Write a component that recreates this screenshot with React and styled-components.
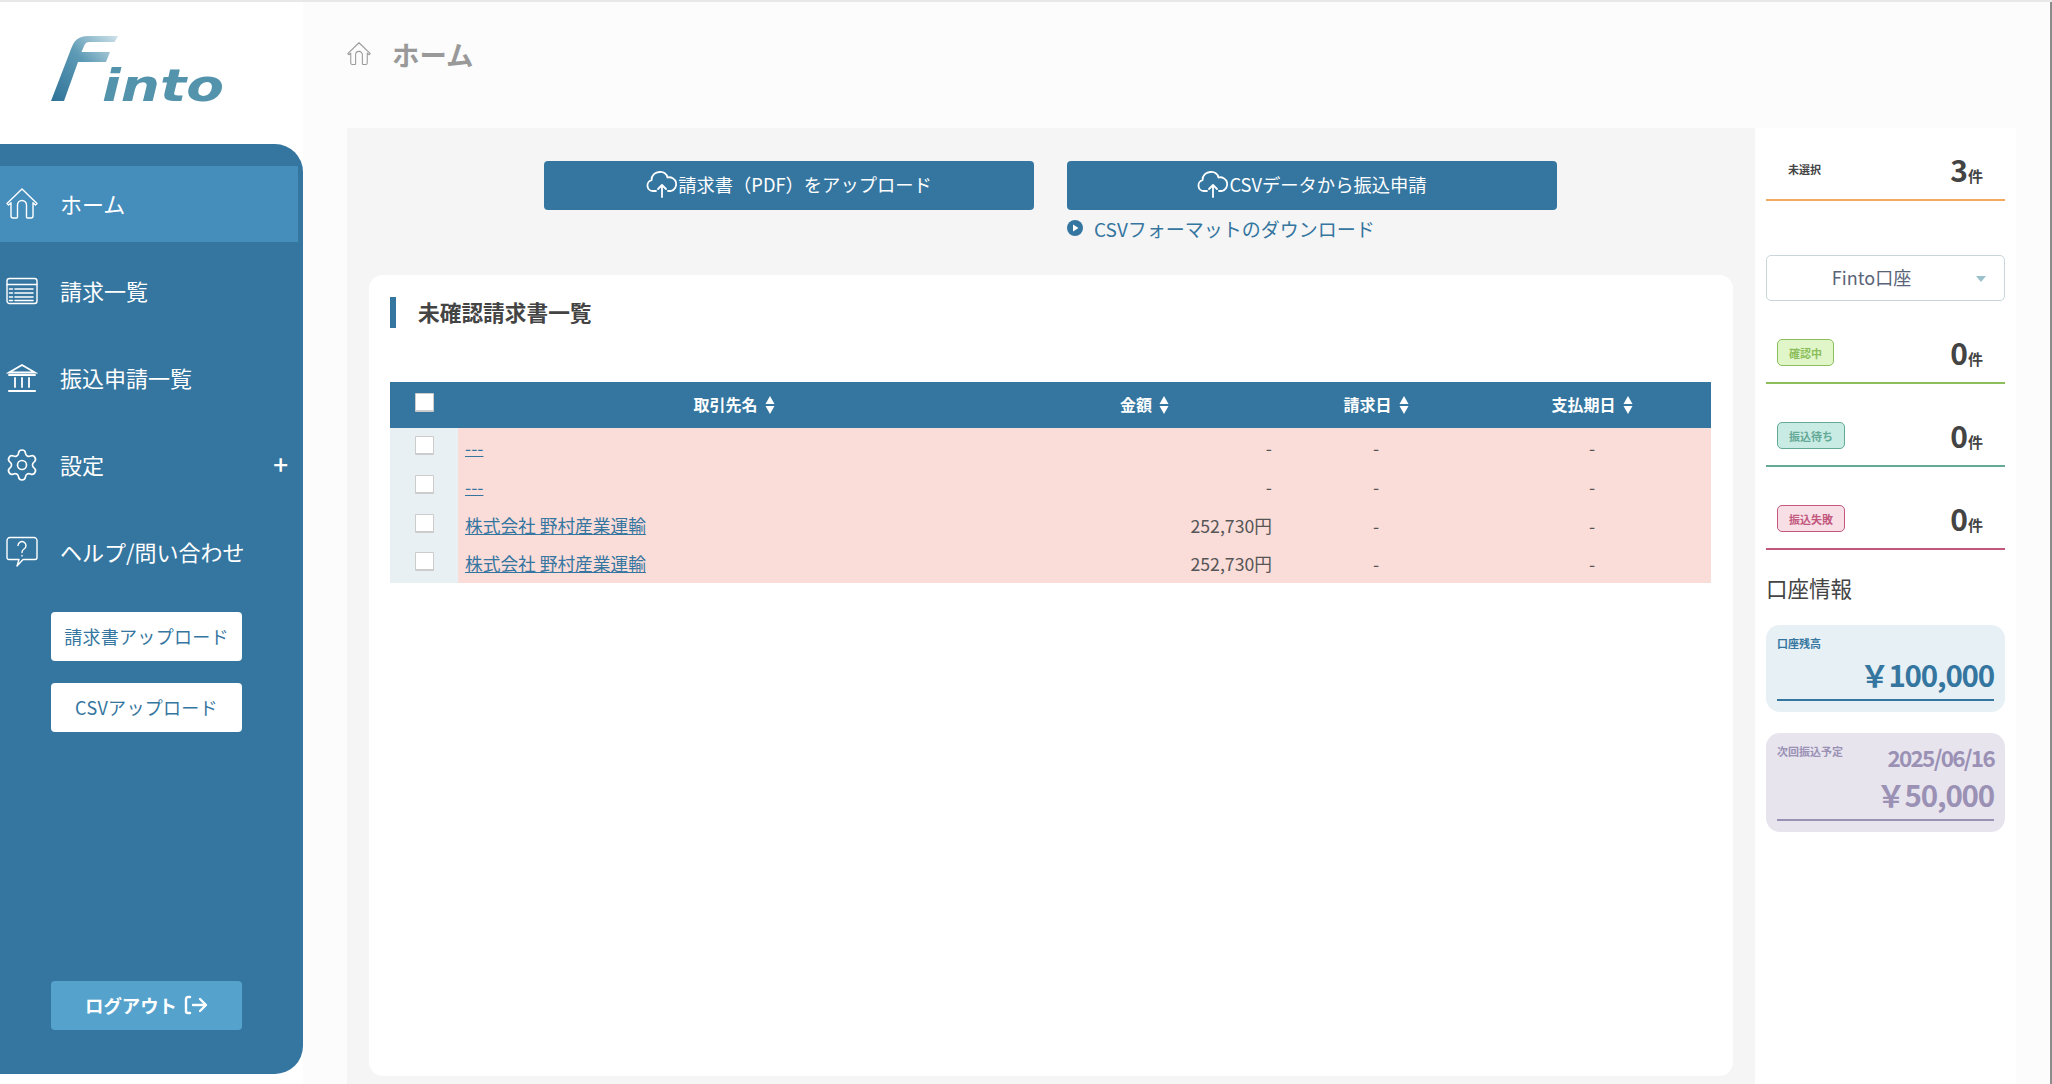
import React from "react";
import styled, { createGlobalStyle } from "styled-components";
import { Settings } from "lucide-react";

const GlobalStyle = createGlobalStyle`
  html, body {
    margin: 0;
    padding: 0;
    background: #fff;
  }
  body {
    font-family: "Noto Sans CJK JP", "Noto Sans", sans-serif;
    color: #444;
  }
  * {
    box-sizing: border-box;
  }
`;

const Page = styled.div`
  display: flex;
  width: 2052px;
  height: 1084px;
  overflow: hidden;
  border-top: 2px solid #e8e8e8;
`;

const Sidebar = styled.aside`
  display: flex;
  flex-direction: column;
  width: 303px;
  flex: none;
  background: #fff;
`;

const LogoBox = styled.div`
  height: 142px;
  flex: none;
  padding: 30px 0 0 50px;
`;

const SideNav = styled.nav`
  display: flex;
  flex-direction: column;
  height: 930px;
  padding: 22px 5px 44px 0;
  background: #3576a0;
  border-radius: 0 28px 28px 0;
`;

const NavItem = styled.a`
  display: flex;
  align-items: center;
  height: 76px;
  flex: none;
  margin-bottom: 11px;
  padding: 0 10px 0 6px;
  color: #fff;
  font-size: 22px;
  background: ${(p) => (p.$active ? "#458dbb" : "transparent")};

  svg {
    flex: none;
    width: 32px;
    height: 32px;
  }
`;

const GearIcon = styled(Settings)`
  && {
    width: 36px;
    height: 36px;
    margin: 0 -2px;
  }
`;

const NavLabel = styled.span`
  flex: 1;
  margin-left: 22px;
  padding-bottom: 2px;
`;

const Plus = styled.span`
  padding-bottom: 2px;
  font-size: 26px;
  font-weight: 500;
  line-height: 1;
`;

const SideButton = styled.a`
  display: flex;
  align-items: center;
  justify-content: center;
  width: 191px;
  height: 49px;
  flex: none;
  margin: ${(p) => (p.$first ? "11px" : "0")} 0 22px 51px;
  padding-bottom: 2px;
  background: #fff;
  border-radius: 4px;
  color: #3576a0;
  font-size: 18px;
  letter-spacing: 0.3px;
`;

const LogoutButton = styled.a`
  display: flex;
  align-items: center;
  justify-content: center;
  gap: 7px;
  width: 191px;
  height: 49px;
  flex: none;
  margin: auto 0 0 51px;
  padding-bottom: 1px;
  background: #55a2cd;
  border-radius: 4px;
  color: #fff;
  font-size: 18.400px;
  font-weight: 700;
`;

const Main = styled.main`
  display: flex;
  flex-direction: column;
  flex: 1;
  min-width: 0;
  padding-left: 44px;
  background: #fcfcfc;
  border-right: 2px solid #8c8c8c;
`;

const PageHeader = styled.header`
  display: flex;
  align-items: center;
  height: 126px;
  flex: none;
  padding-bottom: 22px;
  gap: 21px;
  color: #999;
  font-size: 27.400px;
  font-weight: 700;
`;

const ContentRow = styled.div`
  display: flex;
  flex: 1;
  min-height: 0;
  padding-right: 34px;
`;

const Panel = styled.section`
  display: flex;
  flex-direction: column;
  width: 1408px;
  flex: none;
  padding: 33px 22px 8px 22px;
  background: #f5f5f5;
`;

const ActionRow = styled.div`
  display: flex;
  gap: 33px;
  margin-left: 175px;
`;

const ActionCol = styled.div`
  display: flex;
  flex-direction: column;
  width: 490px;
`;

const ActionButton = styled.a`
  display: flex;
  align-items: center;
  justify-content: center;
  height: 49px;
  padding-bottom: 3px;
  background: #3576a0;
  border-radius: 4px;
  color: #fff;
  font-size: 18.300px;
`;

const DownloadLink = styled.a`
  display: flex;
  align-items: center;
  gap: 11px;
  height: 26px;
  margin-top: 5px;
  color: #3576a0;
  font-size: 19px;
`;

const Card = styled.div`
  flex: 1;
  min-height: 0;
  margin-top: 34px;
  padding: 22px 22px 0 21px;
  background: #fff;
  border-radius: 14px;
`;

const CardTitle = styled.h2`
  display: flex;
  align-items: center;
  height: 31px;
  margin: 0 0 54px;
  padding: 0 0 2px 22px;
  border-left: 6px solid #3576a0;
  color: #444;
  font-size: 21.700px;
  font-weight: 700;
`;

const Table = styled.table`
  width: 1321px;
  border-collapse: collapse;
  table-layout: fixed;
  font-size: 17.700px;
`;

const HeadRow = styled.tr`
  height: 46px;
  background: #3576a0;
`;

const Th = styled.th`
  padding: 0 0 2px;
  color: #fff;
  font-size: 16px;
  font-weight: 700;
  text-align: center;
`;

const CheckCell = styled.td`
  height: 38.750px;
  padding: 8px 0 0 25px;
  background: #e8f0f4;
  vertical-align: top;
`;

const HeadCheckCell = styled.th`
  padding: 0 0 5px 25px;
  text-align: left;
`;

const Checkbox = styled.input.attrs({ type: "checkbox" })`
  display: block;
  width: 19px;
  height: 19px;
  margin: 0;
  appearance: none;
  background: #fff;
  border: 1px solid #ccc;
  border-bottom-width: 2px;
  border-radius: 1px;
`;

const Td = styled.td`
  height: 38.750px;
  padding: 7px ${(p) => (p.$align === "right" ? "7px" : "10px")} 0 ${(p) => (p.$align === "left" ? "7px" : "10px")};
  background: #fadcd9;
  color: #555;
  line-height: 24px;
  vertical-align: top;
  text-align: ${(p) => p.$align || "center"};
`;

const RowLink = styled.a`
  color: #3576a0;
  text-decoration: underline;
`;

const SortMark = styled.svg`
  width: 10px;
  height: 18px;
  margin-left: 7px;
  vertical-align: -3px;
`;

const SideStats = styled.aside`
  display: flex;
  flex-direction: column;
  width: 261px;
  flex: none;
  padding: 0 11px;
  background: #fff;
`;

const StatRow = styled.div`
  display: flex;
  align-items: flex-end;
  justify-content: space-between;
  height: ${(p) => p.$height || 83}px;
  flex: none;
  padding: 0 22px 3px 11px;
  border-bottom: 2px solid ${(p) => p.$line};
`;

const PlainLabel = styled.span`
  margin: 0 0 19px 11px;
  color: #444;
  font-size: 11px;
  font-weight: 700;
`;

const Badge = styled.span`
  display: flex;
  align-items: center;
  height: 27px;
  margin-bottom: 13px;
  padding: 0 11px;
  background: ${(p) => p.$bg};
  border: 1px solid ${(p) => p.$color};
  border-radius: 5px;
  color: ${(p) => p.$color};
  font-size: 11px;
  font-weight: 700;
`;

const Count = styled.span`
  color: #444;
  font-size: 30px;
  font-weight: 700;
  line-height: 40px;
`;

const CountUnit = styled.span`
  font-size: 15px;
`;

const AccountSelect = styled.div`
  position: relative;
  display: flex;
  align-items: center;
  justify-content: center;
  height: 46px;
  flex: none;
  margin: 54px 0 0;
  padding: 0 28px 2px 0;
  background: #fff;
  border: 1px solid #c8d6da;
  border-radius: 5px;
  color: #5a6478;
  font-size: 18px;
`;

const Caret = styled.span`
  position: absolute;
  top: 20px;
  right: 18px;
  border-left: 5px solid transparent;
  border-right: 5px solid transparent;
  border-top: 6px solid #9cc0cc;
`;

const SectionTitle = styled.h3`
  margin: 22px 0 21px;
  color: #444;
  font-size: 21.500px;
  font-weight: 400;
  line-height: 32px;
`;

const BalanceCard = styled.div`
  position: relative;
  display: flex;
  flex-direction: column;
  height: ${(p) => p.$height}px;
  flex: none;
  margin-bottom: 21px;
  padding: 9px 11px 0;
  background: ${(p) => p.$bg};
  border-radius: 14px;
  color: ${(p) => p.$color};
`;

const BalanceLabel = styled.span`
  font-size: 11px;
  font-weight: 700;
  line-height: 18px;
`;

const BalanceDate = styled.span`
  position: absolute;
  top: 8px;
  right: 11px;
  font-size: 22.500px;
  font-weight: 700;
  line-height: 32px;
  letter-spacing: -1.700px;
`;

const BalanceAmount = styled.div`
  margin-top: auto;
  margin-bottom: 11px;
  padding-bottom: 3px;
  border-bottom: 2px solid ${(p) => p.$color};
  font-size: 29.500px;
  font-weight: 700;
  line-height: 44px;
  letter-spacing: -1.200px;
  text-align: right;
`;

const HomeIcon = ({ size = 32, color = "#fff" }) => (
  <svg width={size} height={size} viewBox="0 0 32 32" fill="none" stroke={color} strokeWidth="1.400" strokeLinejoin="round" strokeLinecap="round">
    <path d="M1 15.500 16 1l15 14.500-1.500 1.500L27 14.800V28a2 2 0 0 1-2 2h-3.500a1 1 0 0 1-1-1V17a4.500 4.500 0 0 0-9 0v12a1 1 0 0 1-1 1H7a2 2 0 0 1-2-2V14.800L2.500 17z" />
  </svg>
);

const ListIcon = () => (
  <svg viewBox="0 0 32 32" fill="none" stroke="#fff" strokeWidth="1.400" strokeLinecap="round">
    <rect x="1" y="3.500" width="30" height="25" rx="2.500" />
    <path d="M1 9.500h30" />
    <path d="M3.500 14h3M3.500 18h3M3.500 22h3M3.500 25.500h3M9 14h18M9 18h18M9 22h18M9 25.500h18" strokeWidth="1.600" />
  </svg>
);

const BankIcon = () => (
  <svg viewBox="0 0 32 32" fill="none" stroke="#fff" strokeWidth="1.800" strokeLinecap="round">
    <path d="M3 10.500 16 3l13 7.500z" />
    <path d="M3 13h26M9 16v9M16 16v9M23 16v9" />
    <path d="M3 29h26" strokeWidth="2.200" />
  </svg>
);

const HelpIcon = () => (
  <svg viewBox="0 0 32 32" fill="none" stroke="#fff" strokeWidth="1.400" strokeLinecap="round" strokeLinejoin="round">
    <path d="M4 1.500h24a3 3 0 0 1 3 3v17a2 2 0 0 1-2 2H17l-6 6.500 2-6.500H3a2 2 0 0 1-2-2v-17a3 3 0 0 1 3-3z" />
    <path d="M12 9.500a4 4 0 1 1 6 3.500c-1.500.900-2 1.700-2 3.500M16 19.500v.500" />
  </svg>
);

const CloudUploadIcon = () => (
  <svg width="32" height="28" viewBox="0 0 32 28" fill="none" stroke="#fff" strokeWidth="1.800" strokeLinecap="round" strokeLinejoin="round">
    <path d="M10 21H7a5.500 5.500 0 0 1-1.500-10.800A8 8 0 0 1 14 2a7 7 0 0 1 7.500 5.500A6.800 6.800 0 0 1 25 21h-3" />
    <path d="M16 27V15M12 19l4-4 4 4" />
  </svg>
);

const LogoutIcon = () => (
  <svg width="24" height="20" viewBox="0 0 24 20" fill="none" stroke="#fff" strokeWidth="2.400" strokeLinecap="round" strokeLinejoin="round">
    <path d="M6 2H4a2 2 0 0 0-2 2v12a2 2 0 0 0 2 2h2" />
    <path d="M9 10h13M16 4l6 6-6 6" />
  </svg>
);

const PlayIcon = () => (
  <svg width="16" height="16" viewBox="0 0 16 16">
    <circle cx="8" cy="8" r="8" fill="#3576a0" />
    <path d="M6 4.500 11.500 8 6 11.500z" fill="#fff" />
  </svg>
);

const SortIcon = () => (
  <SortMark viewBox="0 0 10 18">
    <path d="M5 0l4.500 8H.500zM5 18 .500 10h9z" fill="#fff" />
  </SortMark>
);

const Logo = () => (
  <svg width="190" height="80" viewBox="0 0 190 80">
    <defs>
      <linearGradient id="finto-f" x1="0" y1="1" x2="1" y2="0">
        <stop offset="0" stopColor="#2f7298" />
        <stop offset="0.55" stopColor="#5d9ab5" />
        <stop offset="1" stopColor="#cfe3ea" />
      </linearGradient>
    </defs>
    <path
      d="M68 4H38C28 4 24 9 21 17L1 69h13l14-39h28l4-10H31.500l3-7c1-2 2-3 5-3h25z"
      fill="url(#finto-f)"
    />
    <text
      x="52"
      y="69"
      fontFamily="DejaVu Sans"
      fontSize="45"
      fontWeight="700"
      fontStyle="italic"
      textLength="122"
      lengthAdjust="spacingAndGlyphs"
      fill="#5393ab"
    >
      into
    </text>
  </svg>
);

const rows = [
  { name: "---", amount: "-" },
  { name: "---", amount: "-" },
  { name: "株式会社 野村産業運輸", amount: "252,730円" },
  { name: "株式会社 野村産業運輸", amount: "252,730円" },
];

const statuses = [
  { label: "確認中", color: "#8cbf5c", bg: "#e0f5c8" },
  { label: "振込待ち", color: "#63a996", bg: "#c8ebe4" },
  { label: "振込失敗", color: "#c2587e", bg: "#f8dfe6" },
];

export default function App() {
  return (
    <>
      <GlobalStyle />
      <Page>
        <Sidebar>
          <LogoBox>
            <Logo />
          </LogoBox>
          <SideNav>
            <NavItem $active>
              <HomeIcon />
              <NavLabel>ホーム</NavLabel>
            </NavItem>
            <NavItem>
              <ListIcon />
              <NavLabel>請求一覧</NavLabel>
            </NavItem>
            <NavItem>
              <BankIcon />
              <NavLabel>振込申請一覧</NavLabel>
            </NavItem>
            <NavItem>
              <GearIcon strokeWidth={1.1} />
              <NavLabel>設定</NavLabel>
              <Plus>+</Plus>
            </NavItem>
            <NavItem>
              <HelpIcon />
              <NavLabel>ヘルプ/問い合わせ</NavLabel>
            </NavItem>
            <SideButton $first>請求書アップロード</SideButton>
            <SideButton>CSVアップロード</SideButton>
            <LogoutButton>
              ログアウト
              <LogoutIcon />
            </LogoutButton>
          </SideNav>
        </Sidebar>
        <Main>
          <PageHeader>
            <HomeIcon size={24} color="#999" />
            ホーム
          </PageHeader>
          <ContentRow>
            <Panel>
              <ActionRow>
                <ActionCol>
                  <ActionButton>
                    <CloudUploadIcon />
                    請求書（PDF）をアップロード
                  </ActionButton>
                </ActionCol>
                <ActionCol>
                  <ActionButton>
                    <CloudUploadIcon />
                    CSVデータから振込申請
                  </ActionButton>
                  <DownloadLink>
                    <PlayIcon />
                    CSVフォーマットのダウンロード
                  </DownloadLink>
                </ActionCol>
              </ActionRow>
              <Card>
                <CardTitle>未確認請求書一覧</CardTitle>
                <Table>
                  <colgroup>
                    <col width="68" />
                    <col width="552" />
                    <col width="269" />
                    <col width="194" />
                    <col width="238" />
                  </colgroup>
                  <thead>
                    <HeadRow>
                      <HeadCheckCell>
                        <Checkbox readOnly />
                      </HeadCheckCell>
                      <Th>
                        取引先名
                        <SortIcon />
                      </Th>
                      <Th>
                        金額
                        <SortIcon />
                      </Th>
                      <Th>
                        請求日
                        <SortIcon />
                      </Th>
                      <Th>
                        支払期日
                        <SortIcon />
                      </Th>
                    </HeadRow>
                  </thead>
                  <tbody>
                    {rows.map((row, i) => (
                      <tr key={i}>
                        <CheckCell>
                          <Checkbox readOnly />
                        </CheckCell>
                        <Td $align="left">
                          <RowLink>{row.name}</RowLink>
                        </Td>
                        <Td $align="right">{row.amount}</Td>
                        <Td>-</Td>
                        <Td>-</Td>
                      </tr>
                    ))}
                  </tbody>
                </Table>
              </Card>
            </Panel>
            <SideStats>
              <StatRow $height={73} $line="#f4a95f">
                <PlainLabel>未選択</PlainLabel>
                <Count>
                  3<CountUnit>件</CountUnit>
                </Count>
              </StatRow>
              <AccountSelect>
                Finto口座
                <Caret />
              </AccountSelect>
              {statuses.map((s) => (
                <StatRow key={s.label} $line={s.color}>
                  <Badge $color={s.color} $bg={s.bg}>
                    {s.label}
                  </Badge>
                  <Count>
                    0<CountUnit>件</CountUnit>
                  </Count>
                </StatRow>
              ))}
              <SectionTitle>口座情報</SectionTitle>
              <BalanceCard $height={87} $bg="#e7f0f4" $color="#3576a0">
                <BalanceLabel>口座残高</BalanceLabel>
                <BalanceAmount $color="#3576a0">￥100,000</BalanceAmount>
              </BalanceCard>
              <BalanceCard $height={99} $bg="#e7e4ee" $color="#9a91b5">
                <BalanceLabel>次回振込予定</BalanceLabel>
                <BalanceDate>2025/06/16</BalanceDate>
                <BalanceAmount $color="#9a91b5">￥50,000</BalanceAmount>
              </BalanceCard>
            </SideStats>
          </ContentRow>
        </Main>
      </Page>
    </>
  );
}
